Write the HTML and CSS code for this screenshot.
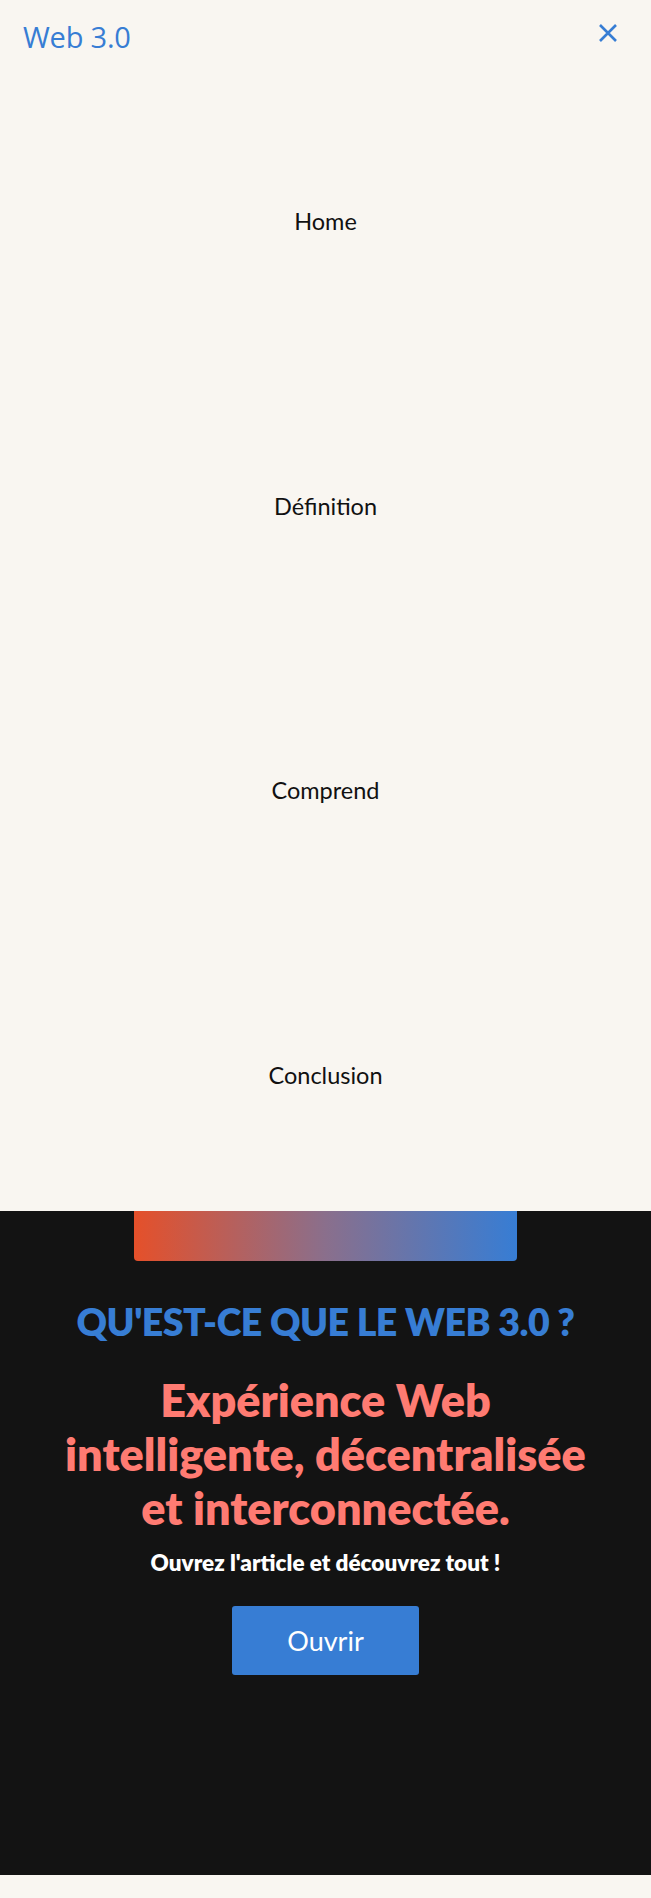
FILE: index.html
```html
<!DOCTYPE html>
<html lang="fr">
<head>
<meta charset="utf-8">
<title>Web 3.0</title>
<link rel="stylesheet" href="styles.css">
</head>
<body>
<div class="menu-panel">
  <header class="menu-header">
    <a class="brand" href="#">Web 3.0</a>
    <button class="close-btn" aria-label="Fermer">
      <svg width="20" height="20" viewBox="0 0 20 20"><path d="M2 2 L18 18 M18 2 L2 18" stroke="#377dd4" stroke-width="2.6" stroke-linecap="butt"/></svg>
    </button>
  </header>
  <nav class="menu-nav">
    <a href="#">Home</a>
    <a href="#">Définition</a>
    <a href="#">Comprend</a>
    <a href="#">Conclusion</a>
  </nav>
</div>
<section class="hero">
  <div class="gradient-bar"></div>
  <h2 class="hero-kicker">QU'EST-CE QUE LE WEB 3.0 ?</h2>
  <h1 class="hero-title">Expérience Web intelligente, décentralisée et interconnectée.</h1>
  <p class="hero-sub">Ouvrez l'article et découvrez tout !</p>
  <a class="hero-btn" href="#">Ouvrir</a>
</section>
<div class="bottom-strip"></div>
</body>
</html>
```
FILE: styles.css
```css
* { box-sizing: border-box; }
html, body { margin: 0; padding: 0; }
body {
  background: #f9f6f1;
  font-family: Lato, "Noto Sans", sans-serif;
}
.menu-panel {
  background: #f9f6f1;
  height: 1211px;
  display: flex;
  flex-direction: column;
}
.menu-header {
  height: 79px;
  display: flex;
  justify-content: space-between;
  align-items: flex-start;
  padding: 17px 33px 0 23px;
}
.brand {
  font-family: "Open Sans", "Noto Sans", sans-serif;
  font-size: 29px;
  color: #377dd4;
  text-decoration: none;
  line-height: 40px;
  letter-spacing: -0.2px;
}
.close-btn {
  background: none;
  border: 0;
  padding: 0;
  margin-top: 6px;
  width: 20px;
  height: 20px;
  cursor: pointer;
}
.close-btn svg { display: block; }
.menu-nav {
  flex: 1;
  display: flex;
  flex-direction: column;
  justify-content: space-between;
  align-items: center;
  padding: 127px 0 121px;
}
.menu-nav a {
  font-size: 23.5px;
  line-height: 30px;
  color: #111;
  text-decoration: none;
}
.hero {
  background: #131313;
  height: 664px;
  display: flex;
  flex-direction: column;
  align-items: center;
  text-align: center;
}
.gradient-bar {
  width: 383px;
  height: 50px;
  border-radius: 0 0 4px 4px;
  background: linear-gradient(90deg, #e5502a 0%, #8a6f8c 50%, #377dd4 100%);
}
.hero-kicker {
  margin: 38px 0 0;
  font-size: 37.5px;
  line-height: 46px;
  font-weight: 800;
  color: #377dd4;
  letter-spacing: -0.5px;
}
.hero-title {
  margin: 28px 0 0;
  width: 550px;
  font-size: 45px;
  line-height: 54px;
  font-weight: 800;
  color: #ff7b72;
}
.hero-sub {
  margin: 13px 0 0;
  font-size: 22.5px;
  line-height: 30px;
  font-weight: 800;
  color: #fff;
}
.hero-btn {
  margin-top: 28px;
  width: 187px;
  height: 69px;
  background: #377dd4;
  border-radius: 3px;
  color: #fff;
  text-decoration: none;
  font-size: 27px;
  display: flex;
  align-items: center;
  justify-content: center;
}
.bottom-strip {
  height: 23px;
  background: #f9f6f1;
}
```
